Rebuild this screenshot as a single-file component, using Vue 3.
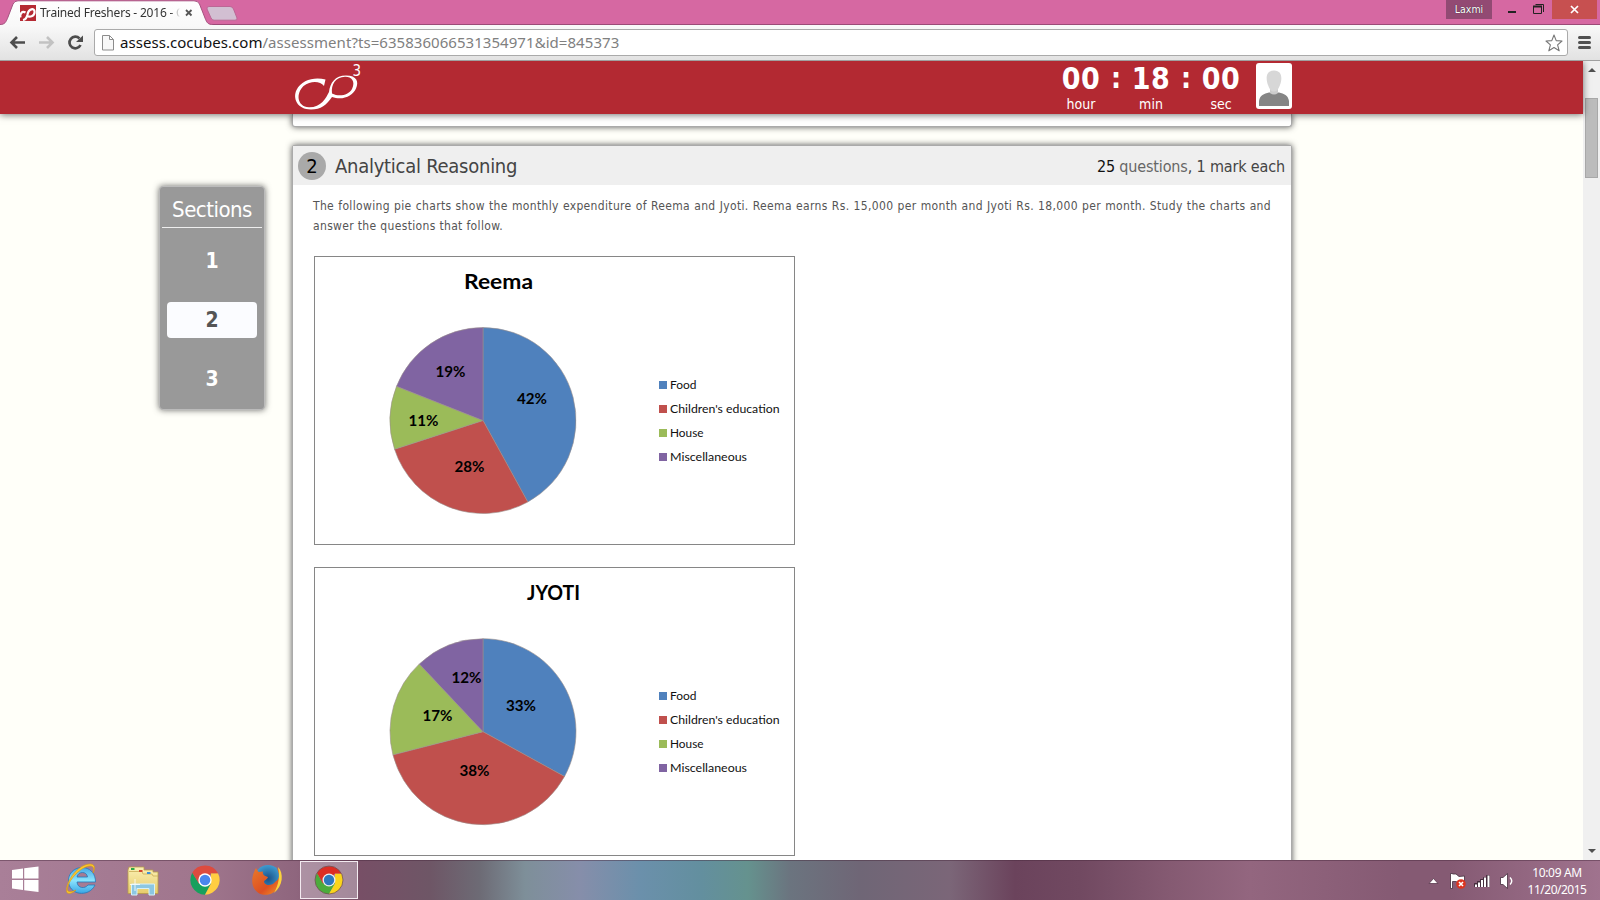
<script setup>
const colors = ['#4f81bd', '#c0504d', '#9bbb59', '#8064a2']
const names = ["Food", "Children's education", 'House', 'Miscellaneous']
const nameWidths = [26.5, 109.5, 33.5, 77]

const charts = [
  {
    title: 'Reema', titleX: 150, titleW: 69, cy: 164.5,
    values: [42, 28, 11, 19],
    labels: [[203, 148], [140.5, 216], [94.5, 170], [121.5, 121]],
  },
  {
    title: 'JYOTI', titleX: 213, titleW: 53, cy: 164.7,
    values: [33, 38, 17, 12],
    labels: [[192, 144], [145.5, 209], [108.5, 154], [137.5, 116]],
  },
]

function slices(chart) {
  const cx = 169
  const r = 93
  let acc = 0
  const point = (p) => {
    const a = (p / 100) * Math.PI * 2
    return `${(cx + r * Math.sin(a)).toFixed(2)} ${(chart.cy - r * Math.cos(a)).toFixed(2)}`
  }
  return chart.values.map((v, i) => {
    const start = point(acc)
    acc += v
    return { color: colors[i], d: `M${cx} ${chart.cy}L${start}A${r} ${r} 0 0 1 ${point(acc)}Z` }
  })
}
const timer = [['00', 'hour'], ['18', 'min'], ['00', 'sec']]
</script>

<template>
  <div class="screen">
    <div class="titlebar">
      <svg class="tabs" width="250" height="25" viewBox="0 0 250 25">
        <defs>
          <linearGradient id="tabfill" x1="0" y1="0" x2="0" y2="1">
            <stop offset="0" stop-color="#fff" /><stop offset="1" stop-color="#f8f8f8" />
          </linearGradient>
        </defs>
        <path d="M0 24.5C5 24.5 6 22 8 17L13 4Q14.500 .8 18 .8H194Q198 .8 199.500 4L205 18C207 23 208 24.500 213 24.500V26H0Z" fill="url(#tabfill)" stroke="#a5527f" />
        <path d="M209 6.500H230Q232.500 6.500 233.500 9L237 18Q237.500 20.200 235 20.200H214Q212 20.200 211 18L207 9Q206.500 6.500 209 6.500Z" fill="#d2bfd2" stroke="#bb6795" />
        <rect x="20" y="5" width="16" height="16" fill="#b52a33" />
        <path d="M25.500 12.500C22 10.500 19.500 14 20.500 17.500M23 20C26 19.500 27 17 27.500 14.500C28.500 8.500 34.600 7.500 34.600 12C34.500 16.500 29.500 17.500 26.500 15.500" fill="none" stroke="#fff" stroke-width="2.200" />
        <path d="M186 10L191.500 15.500M191.500 10L186 15.500" stroke="#555" stroke-width="1.800" />
      </svg>
      <span class="tab-title">Trained Freshers - 2016 - C</span>
      <div class="win">
        <span class="user">Laxmi</span>
        <svg width="60" height="20" viewBox="0 0 60 20">
          <path d="M16 12H24" stroke="#222" stroke-width="2" />
          <path d="M41.500 6.500H49.500V13.500H41.500ZM43.500 4.500H51.500V12" fill="none" stroke="#222" />
          <path d="M41 6.500H50" stroke="#222" stroke-width="2" />
        </svg>
        <span class="close"><svg width="9" height="9" viewBox="0 0 9 9"><path d="M1 1L8 8M8 1L1 8" stroke="#fff" stroke-width="1.700" /></svg></span>
      </div>
    </div>

    <div class="toolbar">
      <svg class="nav" width="94" height="35" viewBox="0 25 94 35">
        <path d="M25 42.500H12M17 37L11.500 42.500L17 48" fill="none" stroke="#4d4d4d" stroke-width="2.600" />
        <path d="M39 42.500H52M47 37L52.500 42.500L47 48" fill="none" stroke="#c2c2c2" stroke-width="2.600" />
        <path d="M79.500 38.500A5.800 5.800 0 1 0 80.500 45" fill="none" stroke="#4d4d4d" stroke-width="2.700" />
        <path d="M83 35.500V42H76Z" fill="#4d4d4d" />
      </svg>
      <div class="omnibox">
        <svg width="12" height="16" viewBox="0 0 12 16"><path d="M.5 .5H7.500L11.500 4.500V15H.5ZM7.500 .5V4.500H11.500" fill="#f8f8f8" stroke="#8c8c8c" /></svg>
        <span class="url"><b>assess.cocubes.com</b>/assessment?ts=635836066531354971&amp;id=845373</span>
        <svg class="star" width="18" height="18" viewBox="0 0 18 18"><path d="M9 1L11.200 6.600L17 7L12.600 10.800L14.200 16.800L9 13.500L3.800 16.800L5.400 10.800L1 7L6.800 6.600Z" fill="#fff" stroke="#777" stroke-width="1.100" stroke-linejoin="round" /></svg>
      </div>
      <svg class="menu" width="13" height="13" viewBox="0 0 13 13"><path d="M1.500 1.500H11.500M1.500 6.500H11.500M1.500 11.500H11.500" stroke="#505050" stroke-width="3" stroke-linecap="round" /></svg>
    </div>

    <div class="viewport">
      <div class="page">
        <header class="head">
          <svg class="logo" width="72" height="51" viewBox="0 -3 72 51">
            <path fill-rule="evenodd" fill="#fff" d="M30.500 15.500L29 22C25 16.500 15.500 16.500 8.500 22C1 29 1.500 42.500 14 43.300C26 43.500 31 34 34 28C35 19 40 11.500 51 11.500C62 11.500 64 18 61 24.500C58 31.500 48 37 37 33C31.500 41 26 45.500 16 45.500C2 45.500 -2.500 34 1.500 26C6.500 15.500 20 12.500 30.500 15.500ZM37 29.500C44 33 53.500 31.500 57 25C61 17 56 12.500 50 12.800C40.500 13.500 36 20 37 29.500Z" />
            <text x="57.500" y="11.500" class="cube">3</text>
          </svg>
          <div class="timer">
            <template v-for="(t, i) in timer" :key="i">
              <span v-if="i" class="colon">:</span>
              <div class="unit"><b>{{ t[0] }}</b><span>{{ t[1] }}</span></div>
            </template>
          </div>
          <svg class="avatar" width="36" height="46" viewBox="0 0 36 46">
            <rect width="36" height="46" rx="3" fill="#fff" />
            <path d="M3 43V38C4 32 8 31 13 29.500H23C28 31 32 32 33 38V43Z" fill="#858585" />
            <path d="M14 24H22V30Q18 33 14 30Z" fill="#ccc" />
            <path d="M18 7.500C27 7.500 26 17 24 22C22 27.500 20 28.500 18 28.500S14 27.500 12 22C10 17 9 7.500 18 7.500Z" fill="#d7d7d7" />
          </svg>
        </header>

        <div class="body">
          <aside class="sections">
            <h3>Sections</h3>
            <ul>
              <li>1</li>
              <li class="on">2</li>
              <li>3</li>
            </ul>
          </aside>
          <main>
            <div class="card prev"></div>
            <section class="card">
              <div class="card-head">
                <span class="num">2</span>
                <h2>Analytical Reasoning</h2>
                <p class="marks"><i>25</i> <em>questions</em>, 1 mark each</p>
              </div>
              <div class="desc">
                <p class="l1">The following pie charts show the monthly expenditure of Reema and Jyoti. Reema earns Rs. 15,000 per month and Jyoti Rs. 18,000 per month. Study the charts and</p>
                <p>answer the questions that follow.</p>
              </div>
              <div class="charts">
                <svg v-for="c in charts" :key="c.title" class="chart" width="481" height="289" viewBox="0 0 481 289">
                  <rect x=".5" y=".5" width="480" height="288" fill="#fff" stroke="#868686" />
                  <text class="ctitle" :x="c.titleX" y="33" :textLength="c.titleW" lengthAdjust="spacingAndGlyphs">{{ c.title }}</text>
                  <path v-for="s in slices(c)" :key="s.color" :d="s.d" :fill="s.color" stroke="#9a8f8c" stroke-width=".6" />
                  <text v-for="(l, i) in c.labels" :key="i" class="pct" :x="l[0]" :y="l[1]" textLength="30" lengthAdjust="spacingAndGlyphs">{{ c.values[i] }}%</text>
                  <g v-for="(n, i) in names" :key="n">
                    <rect x="345" :y="125 + i * 24" width="8" height="8" :fill="colors[i]" />
                    <text class="leg" x="356" :y="133 + i * 24" :textLength="nameWidths[i]" lengthAdjust="spacingAndGlyphs">{{ n }}</text>
                  </g>
                </svg>
              </div>
            </section>
          </main>
        </div>
      </div>
      <div class="scroll">
        <i class="up"></i>
        <i class="thumb"></i>
        <i class="down"></i>
      </div>
    </div>

    <footer class="taskbar">
      <svg width="360" height="40" viewBox="0 860 360 40">
        <defs>
          <linearGradient id="ie" x1="0" y1="0" x2="0" y2="1"><stop offset="0" stop-color="#45a8e6" /><stop offset=".5" stop-color="#8be4fd" /><stop offset="1" stop-color="#38a5e5" /></linearGradient>
          <linearGradient id="fold" x1="0" y1="0" x2="0" y2="1"><stop offset="0" stop-color="#fbf0b4" /><stop offset="1" stop-color="#e7cc6b" /></linearGradient>
          <linearGradient id="fox" x1="0" y1="0" x2="1" y2="1"><stop offset="0" stop-color="#e8792a" /><stop offset=".6" stop-color="#dd4f22" /><stop offset="1" stop-color="#f59b26" /></linearGradient>
          <radialGradient id="globe"><stop offset="0" stop-color="#1b4f86" /><stop offset="1" stop-color="#3f9bd0" /></radialGradient>
        </defs>
        <path d="M12 870L23 868.500V878.500H12ZM24.200 868.300L38.500 866.500V878.500H24.200ZM12 880H23V890L12 888.500ZM24.200 880H38.500V892L24.200 890.200Z" fill="#fff" />

        <path fill-rule="evenodd" d="M95.500 882H77C77.500 888.500 85 889 88 885H95C89 898 68 895.500 68.500 880C69.500 863.500 95.500 862.500 95.500 882ZM77 877H87.500C87 871 78 871 77 877Z" fill="url(#ie)" stroke="#2478ba" stroke-width=".8" />
        <path d="M93 873C96 864.500 89 864 80.500 870C71 877 64 890 69 891.500C71.500 892 74 891 76 890C73 893 67 895.500 66.500 891C66 884 72 873 81 867C90 861.500 98 863.500 93 873Z" fill="#fbc62d" stroke="#d69813" stroke-width=".6" />

        <path d="M129 867H144V870H153V872H158V893.500H128V870Z" fill="url(#fold)" stroke="#b89c4a" stroke-width=".8" />
        <path d="M129 871.500H142L143 874H152L153 876H158" fill="none" stroke="#c9ad55" stroke-width=".8" />
        <path d="M131 869H134.500" stroke="#2aa844" stroke-width="2" />
        <path d="M139 871H142.500" stroke="#d4472e" stroke-width="2" /><path d="M147 873H150.500" stroke="#3c8fd6" stroke-width="2" />
        <path d="M131.500 884H154.500V895H149V888.500H137V895H131.500Z" fill="#8cc7e2" stroke="#d6f1fa" stroke-width="1" />
        <path d="M135 879V891M130 884.500H140" stroke="#fff" stroke-width="1" opacity=".8" />

        <g transform="translate(205 880)">
          <path d="M-12.700 -7.300A14.700 14.700 0 0 0 0 14.700L6 3.400L0 0L-6 3.400Z" fill="#17a05d" />
          <path d="M13 -6.800A14.700 14.700 0 0 1 0 14.700L6 3.400V-6.800Z" fill="#ffcd42" />
          <path d="M-12.700 -7.300A14.700 14.700 0 0 1 13 -6.800H6L0 0L-6 3.400Z" fill="#dd4b3e" />
          <circle r="6.700" fill="#fff" /><circle r="5.300" fill="#4a86ee" />
        </g>

        <circle cx="268" cy="878.500" r="13.500" fill="url(#globe)" />
        <path d="M277 868C282 872 283 881 279 887C272 898 257 897 253 886C251 880 253 873 256 868L258.500 872L263 871.500C262 875 265 876 268 877C267 880 264 880 264 882C266 887 273 885 275 882C281 878 279 874 277 868Z" fill="url(#fox)" />
        <path d="M278 867C284 873 283 886 274 893C279 884 280 876 278 867Z" fill="#fbd23c" />

        <rect x="300.500" y="861.500" width="57" height="37" fill="#c8b8c4" fill-opacity=".55" stroke="#f3eaf0" />
        <g transform="translate(329 880)">
          <path d="M-12 -7A14 14 0 0 0 0 14L6 3.400L0 0L-6 3.400Z" fill="#4cab3c" />
          <path d="M12.300 -6.500A14 14 0 0 1 0 14L6 3.400V-6.500Z" fill="#fbd51b" />
          <path d="M-12 -7A14 14 0 0 1 12.300 -6.500H6L0 0L-6 3.400Z" fill="#dc2d24" />
          <circle r="6.500" fill="#eee" /><circle r="5.200" fill="#2d78bd" />
          <circle r="14" fill="none" stroke="#6b4a4a" stroke-width=".7" />
        </g>
      </svg>
      <svg class="tray" width="90" height="40" viewBox="1425 860 90 40">
        <path d="M1429 883.500L1433.500 878.500L1438 883.500Z" fill="#fff" stroke="#5a3a4e" stroke-width=".8" />
        <path d="M1450.500 873.500V888.500H1452.500V881.500H1456L1459 883H1464.500V876L1459 876.500L1456 874H1452.500V873.500Z" fill="#fff" stroke="#442d3c" stroke-width=".8" />
        <circle cx="1461" cy="884" r="4.800" fill="#dc3520" />
        <path d="M1459 882L1463 886M1463 882L1459 886" stroke="#fff" stroke-width="1.600" />
        <path d="M1474.500 886.500V883.500H1477.500V881.500H1480.500V879.500H1483.500V877.500H1486.500V875.500H1489.500V886.500Z" fill="#442d3c" stroke="#442d3c" />
        <path d="M1476 887V884.500M1479 887V882.500M1482 887V880M1485 887V877.500M1488.500 887V875.500" stroke="#fff" stroke-width="2" />
        <path d="M1500.500 877.500H1503L1507.500 873.500V888.500L1503 884.500H1500.500Z" fill="#fff" stroke="#442d3c" stroke-width=".8" />
        <path d="M1510 877.500Q1513.500 881 1510 884.500" fill="none" stroke="#fff" stroke-width="1.400" />
      </svg>
      <div class="clock"><span>10:09 AM</span><span class="date">11/20/2015</span></div>
    </footer>
  </div>
</template>

<style>
html, body { margin: 0; overflow: hidden; }
</style>

<style scoped>
.screen {
  width: 1600px; height: 900px; display: flex; flex-direction: column; overflow: hidden;
  font-family: "DejaVu Sans Condensed", "DejaVu Sans", sans-serif; font-stretch: condensed;
}
h2, h3, p, ul { margin: 0; padding: 0; font-weight: normal; }
b, i, em { font-style: normal; }
svg { display: block; flex: none; }

.titlebar { height: 24px; background: #d668a2; border-bottom: 1px solid #9b4a77; display: flex; position: relative; }
.tabs { position: absolute; left: 0; top: 0; z-index: 1; }
.tab-title {
  z-index: 2; margin: 5px 0 0 40px; width: 140px; height: 17px; overflow: hidden; white-space: nowrap;
  font: 12px/16px "Noto Sans", sans-serif; letter-spacing: -.2px; color: #333;
  mask-image: linear-gradient(90deg, #000 130px, transparent 140px);
}
.win { margin-left: auto; margin-right: 3px; display: flex; height: 19px; }
.user {
  width: 46px; background: #924a73; color: #fff; text-align: center; font-size: 10.500px; line-height: 18px;
  text-shadow: 0 0 1px #222;
}
.close { width: 45px; background: #c75050; display: flex; align-items: center; justify-content: center; }

.toolbar {
  height: 35px; border-bottom: 1px solid #a0a0a0; display: flex; align-items: center;
  background: linear-gradient(#f9f9f9, #e2e2e2);
}
.omnibox {
  box-sizing: border-box; width: 1474px; height: 27px; border: 1px solid #aaa; border-radius: 3px; background: #fff;
  display: flex; align-items: center; padding: 0 4px 0 7px;
}
.url { margin-left: 6px; padding-bottom: 2px; font: 15px/22px "Noto Sans", sans-serif; letter-spacing: .05px; color: #808080; white-space: nowrap; }
.url b { font-weight: normal; color: #111; }
.star { margin-left: auto; }
.menu { margin-left: 10px; }

.viewport { height: 799px; display: flex; overflow: hidden; }
.page { width: 1583px; background: #fffff9; display: flex; flex-direction: column; }
.head {
  height: 53px; flex: none; background: #b32932; box-shadow: 0 1px 7px rgba(0, 0, 0, .55);
  display: flex; position: relative; z-index: 2; box-sizing: border-box; padding-left: 295px;
}
.cube { font: 15px "DejaVu Sans Condensed", sans-serif; fill: #fff; }
.logo { margin-top: 0; overflow: visible; }
.timer { margin-left: 689px; display: flex; color: #fff; }
.unit { width: 50px; display: flex; flex-direction: column; align-items: center; }
.unit b { font-size: 30px; line-height: 30px; margin-top: 3px; letter-spacing: .4px; }
.unit span { font-size: 14px; line-height: 18px; margin-top: 1px; }
.colon { width: 20px; text-align: center; font-size: 28px; font-weight: bold; line-height: 35px; }
.avatar { margin: 2px 0 0 10px; }

.body { display: flex; padding-left: 159px; min-height: 0; flex: 1; }
.sections {
  box-sizing: border-box; width: 106px; height: 224px; margin-top: 72px; background: #999;
  border: 1px solid #bbb; border-radius: 4px; box-shadow: 0 0 6px rgba(60, 60, 60, .75); color: #fff; text-align: center;
}
.sections h3 { margin: 0 2px; font-size: 22px; line-height: 26px; padding-top: 10px; height: 30px; border-bottom: 1px solid #eee; letter-spacing: -.5px; }
.sections ul { list-style: none; padding: 15px 7px 0; display: flex; flex-direction: column; gap: 23px; }
.sections li { height: 36px; line-height: 36px; font-size: 21px; font-weight: bold; border-radius: 4px; }
.sections .on { background: #fbfcff; color: #555; }

main { margin-left: 27px; width: 1000px; display: flex; flex-direction: column; }
.card { background: #fff; box-shadow: 0 0 6px 0 #555; border: 1px solid #aaa; border-radius: 2px; height: 760px; box-sizing: border-box; flex: none; }
.prev { height: 13px; border-top: 0; border-radius: 0 0 3px 3px; margin-bottom: 18px; }
.card-head { height: 39px; background: #efefef; display: flex; align-items: center; padding: 0 6px 0 5px; }
.num { width: 28px; height: 28px; border-radius: 50%; background: #a9a9a9; text-align: center; line-height: 28px; font-size: 20px; color: #000; }
h2 { margin-left: 9px; font-size: 20px; line-height: 26px; color: #444; letter-spacing: -.26px; }
.marks { margin-left: auto; font-size: 16px; color: #444; padding-top: 2px; letter-spacing: -.15px; }
.marks i { color: #111; }
.marks em { color: #666; }
.desc { margin: 11px 20px 0; font-size: 12px; line-height: 20px; color: #555; letter-spacing: .34px; }
.desc .l1 { text-align-last: justify; white-space: nowrap; }
.charts { margin: 20px 0 0 21px; display: flex; flex-direction: column; gap: 22px; }
.ctitle { font: bold 21px Lato, sans-serif; }
.pct { font: bold 15.500px Lato, sans-serif; }
.leg { font: 12px Lato, sans-serif; fill: #111; }

.scroll { width: 17px; background: #f0f0f0; display: flex; flex-direction: column; align-items: center; }
.up { margin-top: 7px; border: 4px solid transparent; border-top: 0; border-bottom-color: #505050; }
.thumb { box-sizing: border-box; width: 13px; height: 80px; margin-top: 26px; background: #bcbcbc; border: 1px solid #a8a8a8; }
.down { margin-top: auto; margin-bottom: 7px; border: 4px solid transparent; border-bottom: 0; border-top-color: #505050; }

.taskbar {
  box-sizing: border-box; height: 40px; display: flex; box-shadow: inset 0 1px rgba(70, 40, 60, .45);
  background: linear-gradient(90deg, #a97f98 0, #a0768d 200px, #8f667e 295px, #774f66 360px, #6e5666 430px, #6d6b75 480px, #7e8f99 525px, #868eaa 580px, #6b90ab 640px, #638f9f 700px, #65928e 748px, #6b747f 790px, #6f6676 860px, #7b6678 950px, #6b435c 1015px, #714961 1080px, #855a72 1170px, #93667f 1250px, #855a73 1400px, #855a73 1450px, #a0738e 1600px);
}
.tray { margin-left: 1065px; }
.clock {
  width: 86px; margin-left: -1px; display: flex; flex-direction: column; align-items: center; color: #fff;
  font: 12px/17px "Noto Sans", sans-serif; letter-spacing: -.35px; padding-top: 4px;
}
.date { letter-spacing: -.5px; }
</style>
